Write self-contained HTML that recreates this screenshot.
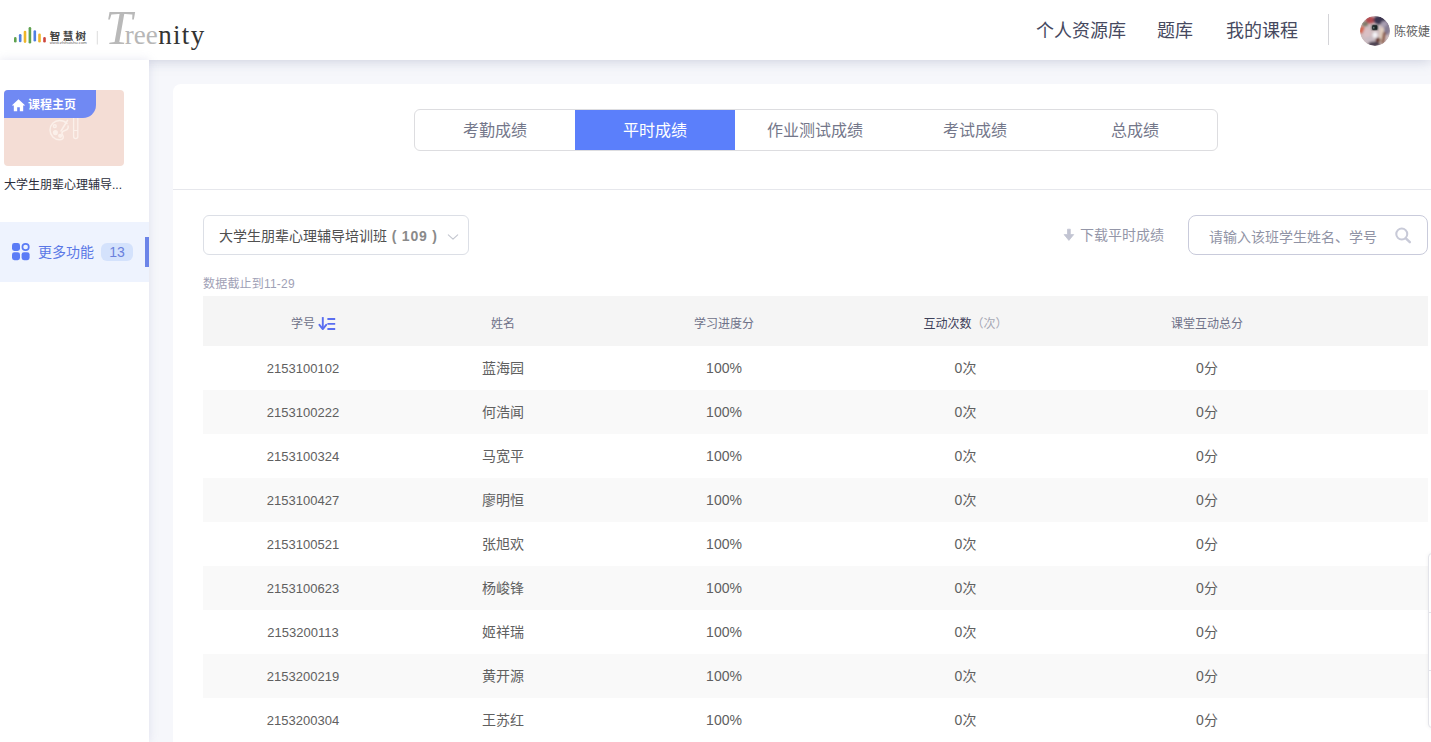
<!DOCTYPE html>
<html lang="zh-CN">
<head>
<meta charset="utf-8">
<title>平时成绩</title>
<style>
*{box-sizing:border-box;margin:0;padding:0}
html,body{width:1431px;height:742px;overflow:hidden}
body{background:#f6f7fb;font-family:"Liberation Sans","Noto Sans CJK SC",sans-serif;color:#3d4059;position:relative}
.abs{position:absolute}
/* header */
#hdr{position:absolute;left:0;top:0;width:1431px;height:60px;background:#fff;box-shadow:0 1px 12px rgba(125,132,170,.36);z-index:5}
#hdr .nav{position:absolute;top:18px;height:26px;line-height:26px;font-size:18px;color:#464960;white-space:nowrap}
#hdr .vline{position:absolute;left:1328px;top:14px;width:1px;height:31px;background:#d4d4d8}
#hdr .uname{position:absolute;left:1394px;top:23px;font-size:12px;line-height:18px;color:#606060;white-space:nowrap}
#avatar{position:absolute;left:1360px;top:16px;width:30px;height:30px;border-radius:50%;overflow:hidden}
/* sidebar */
#side{position:absolute;left:0;top:60px;width:149px;height:682px;background:#fff;box-shadow:0 0 9px rgba(150,155,195,.24);z-index:6}
#cover{position:absolute;left:4px;top:30px;width:120px;height:76px;border-radius:4px;background:#f4ddd5;overflow:hidden}
#cover .tag{position:absolute;left:0;top:0;width:92px;height:28px;background:#7089f3;border-bottom-right-radius:13px;color:#fff;font-size:12px;font-weight:bold;line-height:30px;padding-left:24px;white-space:nowrap}
#ctitle{position:absolute;left:4px;top:117px;font-size:12px;line-height:16px;color:#2b2d3b;white-space:nowrap}
#more{position:absolute;left:0;top:162px;width:149px;height:60px;background:#eef3fe}
#more .bar{position:absolute;left:145px;top:15px;width:4px;height:30px;background:#6c84e8}
#more .txt{position:absolute;left:38px;top:20px;font-size:14px;line-height:20px;color:#5a78e6;white-space:nowrap}
#more .bdg{position:absolute;left:101px;top:21px;width:32px;height:18px;border-radius:6px;background:#d4e2fc;color:#6a80dc;font-size:14px;line-height:19px;text-align:center}
/* card */
#card{position:absolute;left:173px;top:84px;width:1300px;height:700px;background:#fff;border-top-left-radius:8px;z-index:1}
#tabs{position:absolute;left:241px;top:25px;width:804px;height:42px;border:1px solid #dddde0;border-radius:6px;overflow:hidden;background:#fff}
#tabs div{position:absolute;top:0;height:40px;width:160px;line-height:42px;text-align:center;font-size:16px;color:#74778a}
#tabs .on{background:#5b7ffb;color:#fff}
#hr{position:absolute;left:0;top:105px;width:1300px;height:1px;background:#e6e7ec}
#sel{position:absolute;left:30px;top:131px;width:266px;height:40px;border:1px solid #dcdfe6;border-radius:6px;background:#fff}
#sel b{font-weight:bold;color:#8a8a8a;letter-spacing:0.8px}
#sel span{position:absolute;left:15px;top:10px;font-size:14px;line-height:20px;color:#505050;white-space:nowrap}
#dl{position:absolute;left:907px;top:141px;font-size:14px;line-height:20px;color:#9496a8;white-space:nowrap}
#srch{position:absolute;left:1015px;top:131px;width:240px;height:40px;border:1px solid #c9cbdb;border-radius:8px;background:#fff}
#srch span{position:absolute;left:20px;top:11px;font-size:14px;line-height:20px;color:#9093a5;white-space:nowrap}
#note{position:absolute;left:30px;top:192px;font-size:12px;line-height:16px;color:#9fa1b6;letter-spacing:.2px;white-space:nowrap}
#thead{position:absolute;left:30px;top:212px;width:1225px;height:50px;background:#f5f5f5}
.row{position:absolute;left:30px;width:1225px;height:44px}
.row.g{background:#f9f9f9}
.c{position:absolute;top:0;height:100%;text-align:center;white-space:nowrap}
#thead .c{line-height:57px;font-size:12px;color:#6e7188}
.row .c{line-height:45px;font-size:14px;color:#606060}
.c1{left:0;width:200px}.c2{left:200px;width:200px}.c3{left:400px;width:242px}.c4{left:642px;width:241px}.c5{left:883px;width:242px}
.row .c1{font-size:13px}
</style>
</head>
<body>
<div id="hdr">
  <svg class="abs" style="left:0;top:0" width="230" height="60" viewBox="0 0 230 60">
    <g stroke-linecap="round" stroke-width="2.6" fill="none">
      <line x1="15.3" y1="38.4" x2="15.3" y2="41.2" stroke="#5fa24f"/>
      <line x1="20.2" y1="35.2" x2="20.2" y2="41.0" stroke="#4f7fe0"/>
      <line x1="25.0" y1="32.0" x2="25.0" y2="41.6" stroke="#efb52a"/>
      <line x1="29.9" y1="28.2" x2="29.9" y2="42.3" stroke="#5fa24f"/>
      <line x1="34.8" y1="31.6" x2="34.8" y2="40.2" stroke="#4f7fe0"/>
      <line x1="39.5" y1="34.8" x2="39.5" y2="41.2" stroke="#efb52a"/>
      <line x1="44.5" y1="38.4" x2="44.5" y2="41.2" stroke="#cf463c"/>
    </g>
    <text x="49.8" y="40" font-family="'Liberation Sans','Noto Sans CJK SC',sans-serif" font-size="10.5" font-weight="bold" fill="#444" letter-spacing="2.4">智慧树</text>
    <text x="49.8" y="44.4" font-family="'Liberation Sans',sans-serif" font-size="4.3" fill="#666" textLength="37" lengthAdjust="spacingAndGlyphs">www.zhihuishu.com</text>
    <line x1="97.3" y1="31" x2="97.3" y2="44.5" stroke="#dcdcdc" stroke-width="1"/>
    <text x="105" y="44.4" font-family="'Liberation Serif',serif" font-size="27"><tspan font-size="49" font-style="italic" fill="#b9b9b9">T</tspan><tspan dx="-7.5" fill="#b7b7b7">ree</tspan><tspan dx="0.5" fill="#333" letter-spacing="1.3">nity</tspan></text>
  </svg>
  <div class="nav" style="left:1036px">个人资源库</div>
  <div class="nav" style="left:1157px">题库</div>
  <div class="nav" style="left:1226px">我的课程</div>
  <div class="vline"></div>
  <div id="avatar"><svg width="30" height="30" viewBox="0 0 30 30"><defs><filter id="bl" x="-20%" y="-20%" width="140%" height="140%"><feGaussianBlur stdDeviation="1.300"/></filter><clipPath id="cp"><circle cx="15" cy="15" r="15"/></clipPath></defs>
    <g clip-path="url(#cp)"><rect width="30" height="30" fill="#cdbcbf"/>
    <g filter="url(#bl)">
      <ellipse cx="10" cy="4" rx="4.500" ry="3.500" fill="#b2484f"/>
      <ellipse cx="20" cy="4" rx="6.500" ry="4.500" fill="#3a3450"/>
      <ellipse cx="5" cy="8" rx="3" ry="2.500" fill="#7d7a68"/>
      <ellipse cx="2" cy="14" rx="3" ry="3.500" fill="#d4664f"/>
      <ellipse cx="7" cy="17" rx="4" ry="5" fill="#d9c0c4"/>
      <ellipse cx="27" cy="12" rx="3.500" ry="7" fill="#857b93"/>
      <ellipse cx="24" cy="8" rx="3" ry="3" fill="#a79db0"/>
      <path d="M20 12l4 0-1 14-4 1z" fill="#e3d0bf"/>
      <path d="M23 16l3 0-2 11-3 1z" fill="#8a5a48"/>
      <ellipse cx="15" cy="19" rx="2.500" ry="3" fill="#f4f4f8"/>
      <ellipse cx="10" cy="24" rx="5" ry="3.500" fill="#c9bcc4"/>
      <ellipse cx="14" cy="28" rx="6" ry="2.500" fill="#4a3f50"/>
      <ellipse cx="18" cy="24" rx="2.500" ry="2.500" fill="#6b4038"/>
    </g>
    <rect x="12" y="9" width="5.500" height="5" rx="0.800" fill="#1c2626" filter="url(#bl)" opacity=".95"/><rect x="12.300" y="9.300" width="5" height="4.500" rx="0.600" fill="#1a2424"/><rect x="13.200" y="10.800" width="1.200" height="1.800" fill="#9fb7b0" opacity=".7"/>
    </g></svg></div>
  <div class="uname">陈筱婕</div>
</div>
<div id="side">
  <div id="cover">
    <svg class="abs" style="left:0;top:0" width="120" height="76" viewBox="0 0 120 76" fill="none" stroke="#fbf0ea" stroke-width="1.5" stroke-linecap="round" stroke-linejoin="round">
      <path d="M63 33.500c-1.800-1.900-4.400-3-7.400-3-5.400 0-9.600 4.200-9.600 9.600s4.300 9.600 9.600 9.600c2.400 0 3.700-1.100 3.700-2.600 0-1.600-1.400-2.300-1.400-3.800 0-1.600 1.600-2.500 3.600-3.100 2.200-0.700 3-2.600 2.600-4.300"/>
      <circle cx="50.800" cy="36.200" r="1.400"/><circle cx="51.400" cy="42.600" r="1.800" fill="#fbf0ea"/><circle cx="56.200" cy="45.800" r="1.400" fill="#fbf0ea"/>
      <path d="M57 41l6.500-10.500"/>
      <rect x="69.600" y="24" width="4.200" height="24.600" rx="2.100" stroke-width="1.300"/>
      <path d="M69.800 40.500h3.800" stroke-width="1"/>
    </svg>
    <div class="tag"><svg class="abs" style="left:6.500px;top:7.500px" width="15" height="15" viewBox="0 0 16 16"><path d="M8 1.200L0.800 8h2.200v6.200h3.600V9.800h2.800v4.400H13V8h2.200z" fill="#fff"/></svg>课程主页</div>
  </div>
  <div id="ctitle">大学生朋辈心理辅导...</div>
  <div id="more"><svg class="abs" style="left:12px;top:20px" width="19" height="19" viewBox="0 0 19 19"><rect x="0" y="1" width="8" height="8" rx="2.400" fill="#5b7cf6"/><rect x="0" y="10.200" width="8" height="8" rx="2.400" fill="#5b7cf6"/><rect x="9.600" y="10.200" width="8" height="8" rx="2.400" fill="#5b7cf6"/><circle cx="13.600" cy="5" r="3.200" fill="none" stroke="#5b7cf6" stroke-width="1.700"/></svg><div class="txt">更多功能</div><div class="bdg">13</div><div class="bar"></div></div>
</div>
<div id="card">
  <div id="tabs">
    <div style="left:0">考勤成绩</div>
    <div class="on" style="left:160px">平时成绩</div>
    <div style="left:320px">作业测试成绩</div>
    <div style="left:480px">考试成绩</div>
    <div style="left:640px">总成绩</div>
  </div>
  <div id="hr"></div>
  <div id="sel"><span>大学生朋辈心理辅导培训班<b> ( 109 )</b></span><svg class="abs" style="left:241.500px;top:16px" width="14" height="10" viewBox="0 0 14 10"><path d="M2.300 2.800L7 7.200l4.700-4.400" fill="none" stroke="#c3c6cf" stroke-width="1.100" stroke-linecap="round" stroke-linejoin="round"/></svg></div>
  <div id="dl"><svg class="abs" style="left:-18px;top:3px" width="14" height="14" viewBox="0 0 14 14"><path d="M5.500 1.200h2.800v5.400h3.400L6.900 12.400 2.100 6.600h3.400z" fill="#c2c4d2" stroke="#c2c4d2" stroke-width="0.800" stroke-linejoin="round"/></svg>下载平时成绩</div>
  <div id="srch"><span>请输入该班学生姓名、学号</span><svg class="abs" style="left:203.500px;top:9.500px" width="20.500" height="18.600" viewBox="0 0 22 20"><circle cx="9.400" cy="8.600" r="5.900" fill="none" stroke="#c8cad8" stroke-width="2.200"/><path d="M13.800 13.200l4.300 4.200" stroke="#c8cad8" stroke-width="2.600" stroke-linecap="round"/></svg></div>
  <div id="note">数据截止到11-29</div>
  <div id="thead">
    <div class="c c1">学号<svg class="abs" style="left:115px;top:20px" width="18" height="15" viewBox="0 0 18 15" fill="none" stroke="#5a6ef0" stroke-width="1.900" stroke-linejoin="round"><path d="M4.800 1.100v11.800" stroke-linecap="butt"/><path d="M1.400 8.800l3.400 4.300 3.400-4.300" stroke-linecap="round"/><path d="M9.400 3h7.800M9.400 7.900h7.800M9.400 13h7.800"/></svg></div><div class="c c2">姓名</div><div class="c c3">学习进度分</div><div class="c c4"><b style="color:#3d4059;font-weight:normal">互动次数</b><span style="color:#a6a8b4">（次）</span></div><div class="c c5">课堂互动总分</div>
  </div>
  <div class="row" style="top:262px"><div class="c c1">2153100102</div><div class="c c2">蓝海园</div><div class="c c3">100%</div><div class="c c4">0次</div><div class="c c5">0分</div></div>
  <div class="row g" style="top:306px"><div class="c c1">2153100222</div><div class="c c2">何浩闻</div><div class="c c3">100%</div><div class="c c4">0次</div><div class="c c5">0分</div></div>
  <div class="row" style="top:350px"><div class="c c1">2153100324</div><div class="c c2">马宽平</div><div class="c c3">100%</div><div class="c c4">0次</div><div class="c c5">0分</div></div>
  <div class="row g" style="top:394px"><div class="c c1">2153100427</div><div class="c c2">廖明恒</div><div class="c c3">100%</div><div class="c c4">0次</div><div class="c c5">0分</div></div>
  <div class="row" style="top:438px"><div class="c c1">2153100521</div><div class="c c2">张旭欢</div><div class="c c3">100%</div><div class="c c4">0次</div><div class="c c5">0分</div></div>
  <div class="row g" style="top:482px"><div class="c c1">2153100623</div><div class="c c2">杨峻锋</div><div class="c c3">100%</div><div class="c c4">0次</div><div class="c c5">0分</div></div>
  <div class="row" style="top:526px"><div class="c c1">2153200113</div><div class="c c2">姬祥瑞</div><div class="c c3">100%</div><div class="c c4">0次</div><div class="c c5">0分</div></div>
  <div class="row g" style="top:570px"><div class="c c1">2153200219</div><div class="c c2">黄开源</div><div class="c c3">100%</div><div class="c c4">0次</div><div class="c c5">0分</div></div>
  <div class="row" style="top:614px"><div class="c c1">2153200304</div><div class="c c2">王苏红</div><div class="c c3">100%</div><div class="c c4">0次</div><div class="c c5">0分</div></div>
</div>
<div class="abs" style="left:1428px;top:553px;width:20px;height:175px;background:#fff;border:1px solid #e3e4ea;border-radius:4px;z-index:9;box-shadow:0 0 4px rgba(0,0,0,.06)"><i class="abs" style="left:0;top:58px;width:20px;height:1px;background:#e3e4ea"></i><i class="abs" style="left:0;top:116px;width:20px;height:1px;background:#e3e4ea"></i></div>
</body>
</html>
